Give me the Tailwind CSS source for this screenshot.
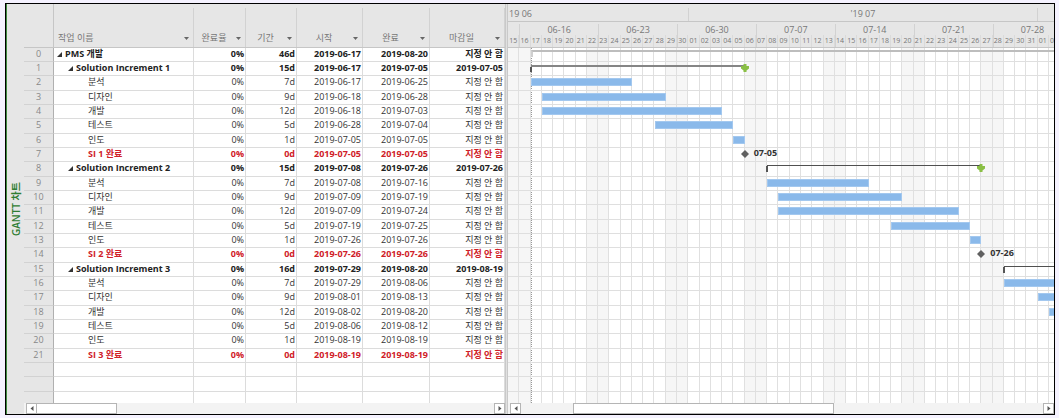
<!DOCTYPE html>
<html lang="ko">
<head>
<meta charset="utf-8">
<meta name="viewport" content="width=device-width, initial-scale=1">
<title>GANTT 차트</title>
<script src="https://cdn.jsdelivr.net/npm/@tailwindcss/browser@4"></script>
</head>
<body class="h-screen bg-[#f5f2ff] pt-[3px] pr-1 pb-[3px] pl-[5px] font-['Open_Sans','Noto_Sans_CJK_KR',sans-serif] text-[9px] leading-[12px] text-[#333]">
<main class="flex h-full overflow-hidden border border-black bg-[#e6e6e6]">
  <div class="flex w-[18px] shrink-0 items-center justify-center border-l border-[#3f8a3f]">
    <h1 class="rotate-180 text-[10px] font-semibold whitespace-nowrap text-[#2f7d32] [text-orientation:sideways] [writing-mode:vertical-rl]">GANTT 차트</h1>
  </div>

  <section class="flex w-[481px] shrink-0 flex-col" aria-label="작업 목록">
    <div class="min-h-0 flex-1 overflow-hidden">
      <table class="w-full table-fixed border-separate border-spacing-0">
        <colgroup>
          <col class="w-[30px]"><col class="w-[140px]"><col class="w-[52px]"><col class="w-[51px]"><col class="w-[66px]"><col class="w-[67px]"><col>
        </colgroup>
        <thead><tr id="heads" class="h-11"></tr></thead>
        <tbody id="tasks"></tbody>
      </table>
    </div>
    <div class="flex h-[11px] shrink-0 bg-[#f3f3f3] pl-0.5">
      <button aria-label="왼쪽으로" class="flex w-[11px] items-center justify-center border border-[#b5b5b5] bg-white"><svg class="h-[5px] w-1" viewBox="0 0 4 5"><path d="M3.5 0v5L.5 2.5z" fill="#555"/></svg></button>
      <div class="w-[80px] border border-l-0 border-[#b5b5b5] bg-white"></div>
      <button aria-label="오른쪽으로" class="ml-auto flex w-[11px] items-center justify-center border border-[#b5b5b5] bg-white"><svg class="h-[5px] w-1" viewBox="0 0 4 5"><path d="M.5 0v5l3-2.5z" fill="#555"/></svg></button>
    </div>
  </section>

  <div class="w-[3px] shrink-0 border-x border-[#c9c9c9] bg-[#e0e0e0]"></div>

  <section class="flex min-w-0 flex-1 flex-col" aria-label="일정">
    <div class="flex h-11 shrink-0 flex-col border-b border-[#c6c6c6] pt-1 text-[#777]">
      <div id="months" class="relative h-[14px] shrink-0 overflow-hidden border-b border-[#c6c6c6]"></div>
      <div id="weeks" class="relative mt-[2px] min-h-0 flex-1 overflow-hidden"></div>
    </div>
    <div id="chart" class="relative min-h-0 flex-1 overflow-hidden bg-white"></div>
    <div class="flex h-[11px] shrink-0 bg-[#f3f3f3] pl-0.5">
      <button aria-label="왼쪽으로" class="flex w-[11px] shrink-0 items-center justify-center border border-[#b5b5b5] bg-white"><svg class="h-[5px] w-1" viewBox="0 0 4 5"><path d="M3.5 0v5L.5 2.5z" fill="#555"/></svg></button>
      <div class="flex min-w-0 flex-1"><div class="ml-[10%] w-1/2 border border-[#b5b5b5] bg-white"></div></div>
      <button aria-label="오른쪽으로" class="flex w-[11px] shrink-0 items-center justify-center border border-[#b5b5b5] bg-white"><svg class="h-[5px] w-1" viewBox="0 0 4 5"><path d="M.5 0v5l3-2.5z" fill="#555"/></svg></button>
    </div>
  </section>
</main>

<script>
// [level, name, duration, start, finish, deadline]
const NA = '지정 안 함';
const tasks = [
  [0,'PMS 개발','46d','2019-06-17','2019-08-20',NA],
  [1,'Solution Increment 1','15d','2019-06-17','2019-07-05','2019-07-05'],
  [2,'분석','7d','2019-06-17','2019-06-25',NA],
  [2,'디자인','9d','2019-06-18','2019-06-28',NA],
  [2,'개발','12d','2019-06-18','2019-07-03',NA],
  [2,'테스트','5d','2019-06-28','2019-07-04',NA],
  [2,'인도','1d','2019-07-05','2019-07-05',NA],
  [3,'SI 1 완료','0d','2019-07-05','2019-07-05',NA],
  [1,'Solution Increment 2','15d','2019-07-08','2019-07-26','2019-07-26'],
  [2,'분석','7d','2019-07-08','2019-07-16',NA],
  [2,'디자인','9d','2019-07-09','2019-07-19',NA],
  [2,'개발','12d','2019-07-09','2019-07-24',NA],
  [2,'테스트','5d','2019-07-19','2019-07-25',NA],
  [2,'인도','1d','2019-07-26','2019-07-26',NA],
  [3,'SI 2 완료','0d','2019-07-26','2019-07-26',NA],
  [1,'Solution Increment 3','16d','2019-07-29','2019-08-20','2019-08-19'],
  [2,'분석','7d','2019-07-29','2019-08-06',NA],
  [2,'디자인','9d','2019-08-01','2019-08-13',NA],
  [2,'개발','12d','2019-08-02','2019-08-20',NA],
  [2,'테스트','5d','2019-08-06','2019-08-12',NA],
  [2,'인도','1d','2019-08-19','2019-08-19',NA],
  [3,'SI 3 완료','0d','2019-08-19','2019-08-19',NA],
  null, null, null
];
const el = id => document.getElementById(id);
const first = Date.UTC(2019, 5, 15), DAY = 864e5, span = 48.45;
const offset = s => (Date.parse(s) - first) / DAY;
const pct = d => (d / span * 100) + '%';
const two = n => String(n).padStart(2, '0');

// Table header
el('heads').innerHTML = '<td class="p-0 border-r border-b border-[#c6c6c6]"></td>' +
  ['작업 이름','완료율','기간','시작','완료','마감일'].map((h, i) =>
    `<th scope="col" class="p-0 pt-1 align-bottom font-normal text-[#777] border-b border-[#c6c6c6]"><div class="flex h-[39px] items-end pb-[3px] pr-1 border-r border-[#d2d2d2]"><span class="flex-1 ${i ? 'pr-0.5 text-center' : 'pl-1 text-left'}">${h}</span><svg class="mb-1 h-[3px] w-[5px]" viewBox="0 0 5 3"><path d="M0 0h5L2.5 3z" fill="#666"/></svg></div></th>`).join('');

// Table rows
const rowHeight = i => i % 3 === 2 ? 'h-[15px]' : 'h-[14px]';
const indent = ['pl-[3px]', 'pl-[14px]', 'pl-[34px]', 'pl-[34px]'];
const tone = ['font-bold text-[#222]', 'font-bold text-[#222]', 'text-[#333]', 'font-bold text-[#d02028]'];
const fold = '<svg class="mr-[3px] h-[5px] w-[5px]" viewBox="0 0 5 5"><path d="M5 0v5H0z" fill="#333"/></svg>';
el('tasks').innerHTML = tasks.map((t, i) => {
  const cell = v => `<td class="p-0 pr-px text-right align-top whitespace-nowrap bg-white border-r border-b border-[#dcdcdc]"><div class="h-3">${v}</div></td>`;
  const vals = t ? ['0%', ...t.slice(2)] : ['', '', '', '', ''];
  return `<tr class="${rowHeight(i)} ${t ? tone[t[0]] : ''}">
    <th scope="row" class="p-0 text-center align-top font-normal text-[#888] border-r border-b border-b-[#d2d2d2] border-r-[#b0b0b0]"><div class="h-3">${t ? i : ''}</div></th>
    <td class="p-0 align-top whitespace-nowrap bg-white border-r border-b border-[#dcdcdc]"><div class="flex h-3 items-center ${t ? indent[t[0]] : ''}">${t ? (t[0] < 2 ? fold : '') + t[1] : ''}</div></td>
    ${vals.map(cell).join('')}</tr>`;
}).join('');

// Time scale
el('months').innerHTML =
  `<span class="absolute inset-y-0 left-px">19 06</span>
   <span class="absolute inset-y-0 text-center border-x border-[#d2d2d2]" style="left:${pct(16)};width:${pct(31)}">'19 07</span>`;
let weeks = '', grid = '';
for (let d = 0; d < 49; d++) {
  const date = new Date(first + d * DAY), wd = date.getUTCDay();
  if (wd === 0) weeks += `<span class="absolute inset-y-0 text-center border-l border-[#d2d2d2]" style="left:${pct(d)};width:${pct(7)}">${two(date.getUTCMonth() + 1)}-${two(date.getUTCDate())}</span>`;
  weeks += `<span class="absolute bottom-0 h-3 text-center text-[7px] border-r border-[#dadada]" style="left:${pct(d)};width:${pct(1)}">${two(date.getUTCDate())}</span>`;
  grid += `<div class="absolute inset-y-0 border-r border-[#e0e0e0] ${wd % 6 ? '' : 'bg-[#f6f6f6]'}" style="left:${pct(d)};width:${pct(1)}"></div>`;
}
el('weeks').innerHTML = weeks;
grid += `<div class="absolute inset-y-0 border-l border-dotted border-[#999]" style="left:${pct(2)}"></div>`;

// Bars, summaries and milestones that start inside the visible span
const rows = tasks.map((t, i) => {
  let mark = '';
  if (t && offset(t[3]) < span) {
    const a = offset(t[3]), b = offset(t[4]) + 1;
    const box = `style="left:${pct(a)};width:${pct(b - a)}"`;
    if (t[0] === 2) mark = `<div class="absolute top-0.5 h-2 border border-[#a3c8ef] bg-[#8ab9ea]" ${box}></div>`;
    else if (t[0] === 3) mark = `<div class="absolute top-0.5 -ml-1 flex items-center gap-[5px] font-bold text-[#333]" style="left:${pct(b)}"><svg class="h-2 w-2" viewBox="0 0 8 8"><path d="M4 0l4 4-4 4-4-4z" fill="#606060"/></svg><span class="-mt-0.5 leading-[10px]">${t[4].slice(5)}</span></div>`;
    else if (i === 0) mark = `<div class="absolute top-0.5 h-[7px] border-t-2 border-l-2 border-t-[#bdbdbd] border-l-[#cfcfcf]" ${box}></div>`;
    else mark = `<div class="absolute top-[3px] h-[7px] ${i === 1 ? 'border-t-2 border-[#858585]' : 'border-t border-[#505050]'}" ${box}><i class="block h-full w-0.5 -ml-px bg-[#555]"></i></div>
      <svg class="absolute top-0.5 -ml-1 h-2 w-2" style="left:${pct(b)}" viewBox="0 0 8 8"><path d="M2.500 0h3v2H8v2.500L5.500 6.500V8h-3V6.500L0 4.500V2h2.500z" fill="#8abf45"/></svg>`;
  }
  return `<div class="relative border-b border-[#dfdfdf] ${rowHeight(i)}">${mark}</div>`;
}).join('');
el('chart').innerHTML = grid + rows;
</script>
</body>
</html>
